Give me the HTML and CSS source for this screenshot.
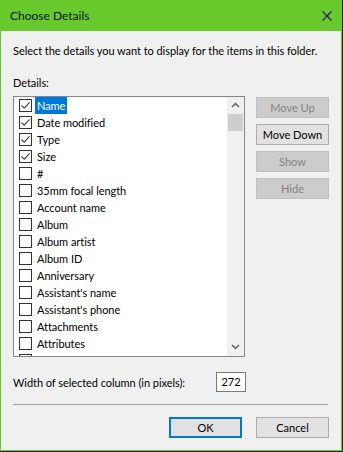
FILE: index.html
```html
<!DOCTYPE html>
<html lang="en">
<head>
    <meta charset="UTF-8">
    <title>Choose Details</title>
    <link rel="stylesheet" href="styles.css">
</head>
<body>
    <div class="window">
        <div class="titlebar">
            <span class="title">Choose Details</span>
            <svg class="close" width="10" height="10" viewBox="0 0 10 10">
                <path d="M0.5 0.5 L9.5 9.5 M9.5 0.5 L0.5 9.5" stroke="#111" stroke-width="1.1" fill="none"/>
            </svg>
        </div>

        <div class="content">
            <p class="intro">Select the details you want to display for the items in this folder.</p>
            <p class="label">Details:</p>

            <div class="main">
                <div class="listbox">
                    <ul class="items">
                        <li><span class="box"><svg viewBox="0 0 11 11"><path d="M1.5 5.5 L4.2 8.2 L9.6 2.4" stroke="#444" stroke-width="1.1" fill="none"/></svg></span><span class="text selected">Name</span></li>
                        <li><span class="box"><svg viewBox="0 0 11 11"><path d="M1.5 5.5 L4.2 8.2 L9.6 2.4" stroke="#444" stroke-width="1.1" fill="none"/></svg></span><span class="text">Date modified</span></li>
                        <li><span class="box"><svg viewBox="0 0 11 11"><path d="M1.5 5.5 L4.2 8.2 L9.6 2.4" stroke="#444" stroke-width="1.1" fill="none"/></svg></span><span class="text">Type</span></li>
                        <li><span class="box"><svg viewBox="0 0 11 11"><path d="M1.5 5.5 L4.2 8.2 L9.6 2.4" stroke="#444" stroke-width="1.1" fill="none"/></svg></span><span class="text">Size</span></li>
                        <li><span class="box"></span><span class="text">#</span></li>
                        <li><span class="box"></span><span class="text">35mm focal length</span></li>
                        <li><span class="box"></span><span class="text">Account name</span></li>
                        <li><span class="box"></span><span class="text">Album</span></li>
                        <li><span class="box"></span><span class="text">Album artist</span></li>
                        <li><span class="box"></span><span class="text">Album ID</span></li>
                        <li><span class="box"></span><span class="text">Anniversary</span></li>
                        <li><span class="box"></span><span class="text">Assistant's name</span></li>
                        <li><span class="box"></span><span class="text">Assistant's phone</span></li>
                        <li><span class="box"></span><span class="text">Attachments</span></li>
                        <li><span class="box"></span><span class="text">Attributes</span></li>
                        <li><span class="box"></span></li>
                    </ul>
                    <div class="scrollbar">
                        <svg class="arrow" width="9" height="6" viewBox="0 0 9 6"><path d="M1 5 L4.5 1.5 L8 5" stroke="#606060" stroke-width="1.5" fill="none"/></svg>
                        <div class="thumb"></div>
                        <div class="track"></div>
                        <svg class="arrow" width="9" height="6" viewBox="0 0 9 6"><path d="M1 1 L4.5 4.5 L8 1" stroke="#606060" stroke-width="1.5" fill="none"/></svg>
                    </div>
                </div>

                <div class="side">
                    <button class="btn" disabled>Move Up</button>
                    <button class="btn">Move Down</button>
                    <button class="btn" disabled>Show</button>
                    <button class="btn" disabled>Hide</button>
                </div>
            </div>

            <div class="width-row">
                <span>Width of selected column (in pixels):</span>
                <span class="num">272</span>
            </div>

            <div class="sep"></div>

            <div class="footer">
                <button class="btn default">OK</button>
                <button class="btn">Cancel</button>
            </div>
        </div>
    </div>
</body>
</html>
```

FILE: styles.css
```css
body {
    margin: 0;
    background-color: #2a2a2a;
    font-family: Lato, "Noto Sans", sans-serif;
    font-size: 11px;
    letter-spacing: -0.05px;
    color: #000;
}
.window {
    width: 342px;
    height: 451px;
    box-sizing: border-box;
    background-color: #f0f0f0;
    border: 1px solid #67c92c;
    border-top: none;
    display: flex;
    flex-direction: column;
}
.titlebar {
    height: 31px;
    background-color: #67c92c;
    display: flex;
    align-items: center;
    justify-content: space-between;
    padding: 0 10px 0 10px;
    margin: 0 -1px;
}
.title {
    font-size: 12px;
    letter-spacing: 0;
    color: #111;
}
.close {
    margin-top: 1px;
}
.content {
    padding: 0 12px 0 12px;
}
p {
    margin: 0;
    line-height: 16px;
    white-space: nowrap;
}
.intro {
    margin-top: 12px;
}
.label {
    margin-top: 16px;
}
.main {
    display: flex;
    margin-top: 5px;
}
.listbox {
    width: 233px;
    height: 261px;
    box-sizing: border-box;
    border: 1px solid #828790;
    background-color: white;
    display: flex;
    overflow: hidden;
}
.items {
    list-style: none;
    margin: 0;
    padding: 0;
    flex: 1;
}
.items li {
    height: 17px;
    display: flex;
    align-items: flex-start;
    padding-left: 5px;
}
.box {
    width: 11px;
    height: 11px;
    border: 1px solid #333;
    background-color: white;
    margin-top: 2px;
    flex-shrink: 0;
}
.box svg {
    display: block;
    width: 11px;
    height: 11px;
}
.text {
    margin-left: 3px;
    padding: 1px 2px 0 2px;
    line-height: 16px;
    white-space: nowrap;
}
.selected {
    background-color: #0078d7;
    color: white;
}
.scrollbar {
    width: 17px;
    background-color: #f0f0f0;
    display: flex;
    flex-direction: column;
    align-items: center;
}
.arrow {
    margin: 5px 0 6px 0;
}
.thumb {
    width: 15px;
    height: 17px;
    background-color: #cdcdcd;
}
.track {
    flex: 1;
}
.side {
    display: flex;
    flex-direction: column;
    gap: 6px;
    margin-left: 11px;
    padding-top: 1px;
}
.btn {
    width: 73px;
    height: 21px;
    padding: 0;
    font-family: Lato, "Noto Sans", sans-serif;
    font-size: 11px;
    color: #000;
    background-color: #e1e1e1;
    border: 1px solid #adadad;
    box-sizing: border-box;
}
.btn:disabled {
    background-color: #cccccc;
    border-color: #bfbfbf;
    color: #838383;
}
.default {
    border: 2px solid #0078d7;
}
.width-row {
    display: flex;
    align-items: center;
    justify-content: space-between;
    width: 233px;
    margin-top: 15px;
}
.num {
    width: 30px;
    height: 20px;
    box-sizing: border-box;
    border: 1px solid #7a7a7a;
    background-color: white;
    text-align: center;
    line-height: 18px;
}
.sep {
    height: 1px;
    width: 315px;
    background-color: #a0a0a0;
    margin-top: 12px;
}
.footer {
    display: flex;
    justify-content: flex-end;
    gap: 14px;
    margin-top: 12px;
}
```
